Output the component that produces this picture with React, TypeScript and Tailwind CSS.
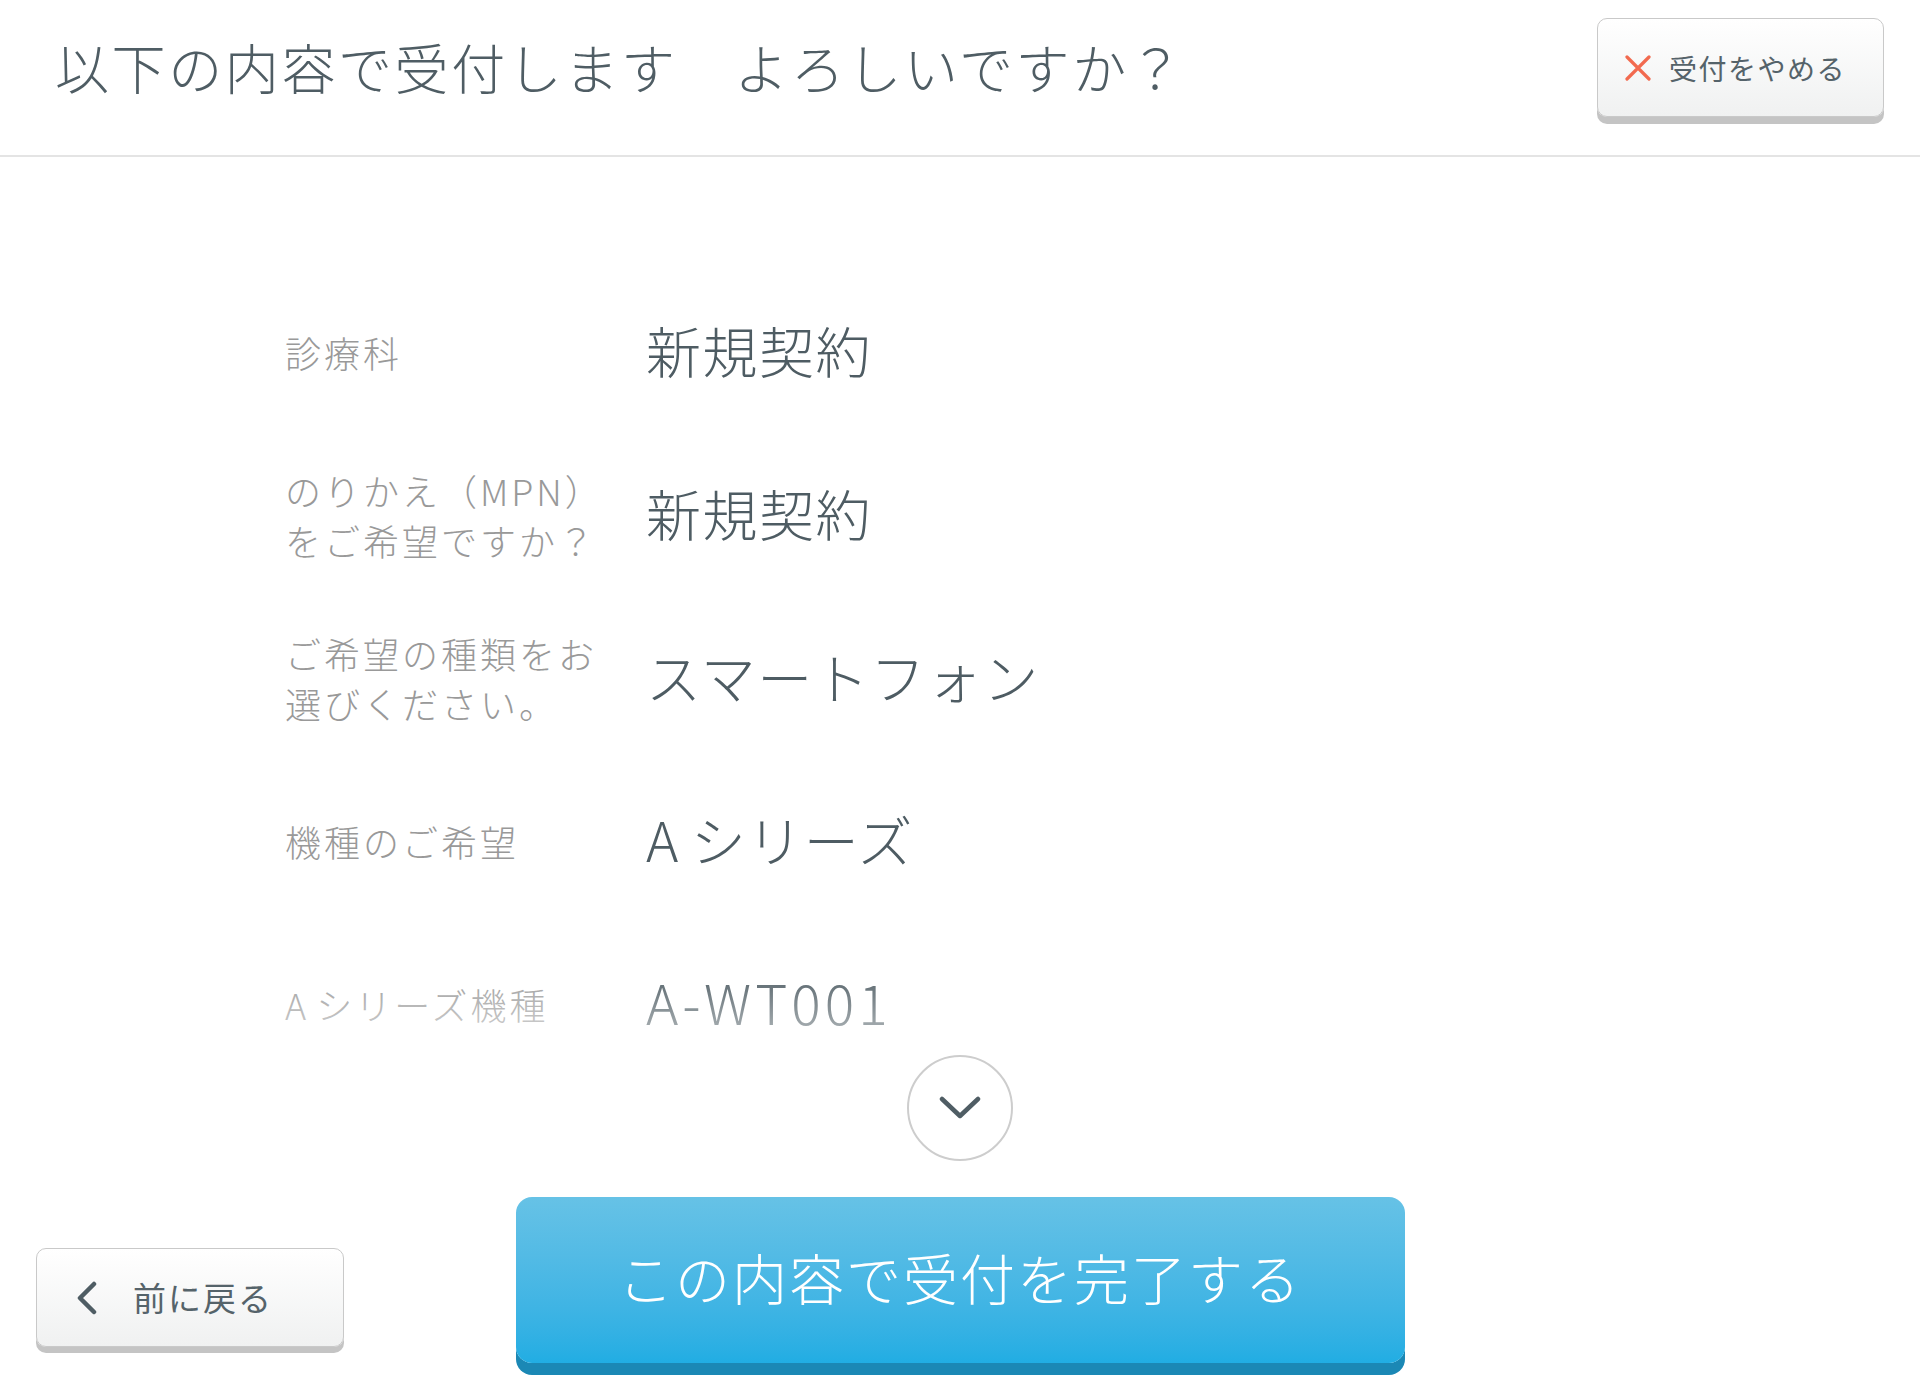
import React from "react";

const rows = [
  { label: "診療科", value: "新規契約" },
  { label: "のりかえ（MPN）をご希望ですか？", value: "新規契約" },
  { label: "ご希望の種類をお選びください。", value: "スマートフォン" },
  { label: "機種のご希望", value: "Aシリーズ" },
  { label: "Aシリーズ機種", value: "A-WT001" },
];

// leading Latin "A" is set a bit wider, as in the design font
function Text({ text }: { text: string }) {
  if (text.startsWith("A") && !text.startsWith("A-")) {
    return (
      <>
        <span className="pr-[0.2em]">A</span>
        {text.slice(1)}
      </>
    );
  }
  return <>{text}</>;
}

export default function App() {
  return (
    <div
      className="w-[1920px] h-[1400px] bg-white flex flex-col overflow-hidden"
      style={{ fontFamily: '"Noto Sans CJK JP", "Noto Sans", sans-serif' }}
    >
      {/* Header */}
      <div className="h-[157px] shrink-0 flex items-start justify-between pl-[55px] pr-[36px] border-b-[2px] border-[#e4e4e4]">
        <h1 className="mt-[40px] text-[54px] leading-none tracking-[2.6px] text-[#4f5d64] font-light">
          以下の内容で受付します　よろしいですか？
        </h1>

        <button className="mt-[18px] w-[287px] h-[99px] flex items-center pl-[27px] gap-[18px] rounded-[10px] border border-[#c9c9c9] bg-gradient-to-b from-white to-[#f0f1f1] shadow-[0_7px_0_#c4c4c4]">
          <svg width="26" height="26" viewBox="0 0 26 26">
            <path
              d="M2 2 L24 24 M24 2 L2 24"
              stroke="#f26a4f"
              strokeWidth="3.2"
              strokeLinecap="round"
            />
          </svg>
          <span className="text-[28px] leading-none tracking-[1.5px] text-[#55636a]">
            受付をやめる
          </span>
        </button>
      </div>

      {/* Rows */}
      <div className="relative flex-1 overflow-hidden">
        <div className="pt-[113px] pl-[285px]">
          {rows.map((row) => (
            <div key={row.label} className="h-[163px] flex items-center">
              <div className="w-[361px] shrink-0">
                <div className="w-[332px] text-[36px] leading-[50px] tracking-[3px] text-[#999999] font-light">
                  <Text text={row.label} />
                </div>
              </div>
              <div
                className={
                  row.value === "A-WT001"
                    ? "-mt-[4px] text-[55px] leading-none tracking-[4px] text-[#4e5c63] font-light"
                    : "-mt-[4px] text-[55px] leading-none tracking-[1.5px] text-[#4e5c63] font-light"
                }
              >
                <Text text={row.value} />
              </div>
            </div>
          ))}
        </div>

        {/* fade over the last row */}
        <div className="absolute left-[36px] right-[36px] top-[810px] bottom-0 bg-gradient-to-b from-white/0 via-white to-white via-[55%]" />

        {/* more indicator */}
        <div className="absolute left-1/2 -translate-x-1/2 top-[898px] w-[106px] h-[106px] rounded-full border-2 border-[#cdcdcd] bg-white flex items-center justify-center">
          <svg width="42" height="24" viewBox="0 0 42 24">
            <path
              d="M3 3 L21 20 L39 3"
              fill="none"
              stroke="#4f5d64"
              strokeWidth="4.5"
              strokeLinecap="round"
              strokeLinejoin="round"
            />
          </svg>
        </div>
      </div>

      {/* Footer */}
      <div className="h-[203px] shrink-0 grid grid-cols-[1fr_889px_1fr]">
        <div>
          <button className="ml-[36px] mt-[51px] w-[308px] h-[99px] flex items-center pl-[38px] gap-[34px] rounded-[10px] border border-[#c9c9c9] bg-gradient-to-b from-white to-[#f0f1f1] shadow-[0_6px_0_#c4c4c4]">
            <svg width="24" height="34" viewBox="0 0 24 34">
              <path
                d="M19 3 L5 17 L19 31"
                fill="none"
                stroke="#4f5d64"
                strokeWidth="4.5"
                strokeLinecap="round"
                strokeLinejoin="round"
              />
            </svg>
            <span className="text-[33px] leading-none tracking-[2px] text-[#55636a]">
              前に戻る
            </span>
          </button>
        </div>

        <button className="h-[166px] pb-[8px] rounded-[16px] bg-gradient-to-b from-[#66c2e6] to-[#21ade3] shadow-[0_12px_0_#1b88b5] flex items-center justify-center">
          <span className="text-[55px] leading-none tracking-[2px] text-white font-light">
            この内容で受付を完了する
          </span>
        </button>

        <div />
      </div>
    </div>
  );
}
